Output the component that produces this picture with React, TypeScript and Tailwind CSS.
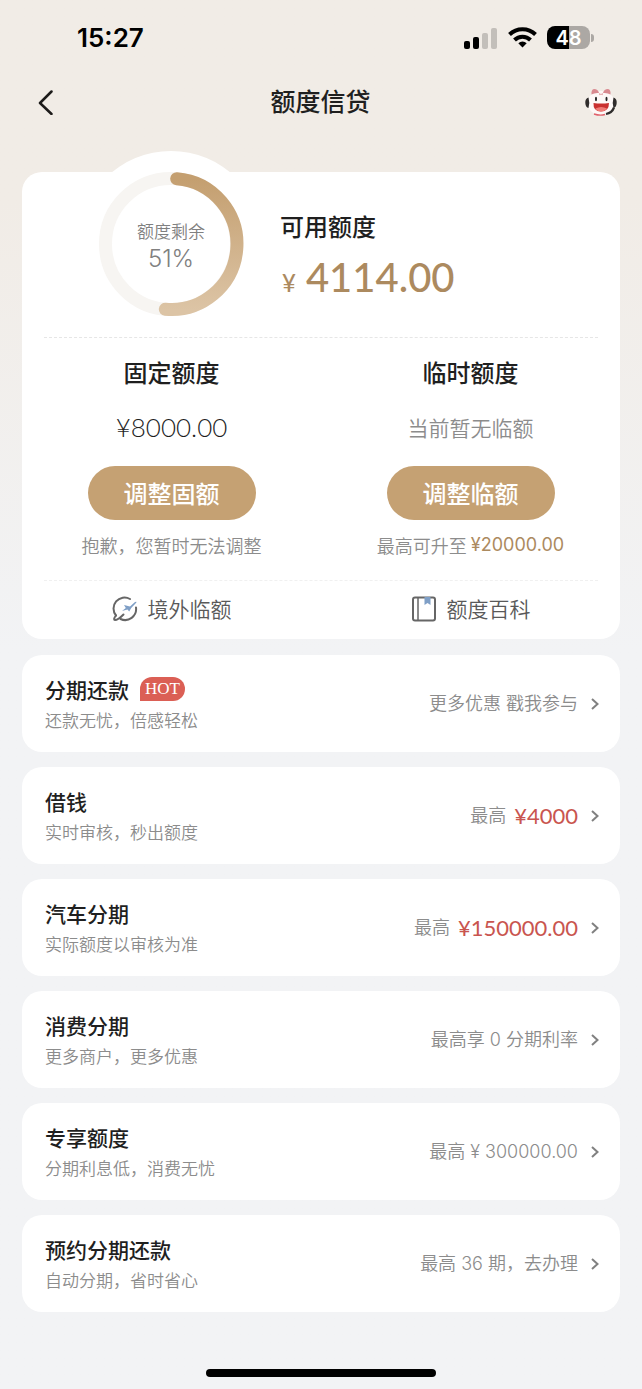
import React from 'react';

const latin = "font-['Inter','Noto_Sans_CJK_SC',sans-serif]";
const amount = "font-['Lato','Noto_Sans_CJK_SC',sans-serif]";

interface Product {
    title: string;
    desc: string;
    note: string;
    price?: string;
    hot?: boolean;
}

const products: Product[] = [
    { title: '分期还款', desc: '还款无忧，倍感轻松', note: '更多优惠 戳我参与', hot: true },
    { title: '借钱', desc: '实时审核，秒出额度', note: '最高', price: '¥4000' },
    { title: '汽车分期', desc: '实际额度以审核为准', note: '最高', price: '¥150000.00' },
    { title: '消费分期', desc: '更多商户，更多优惠', note: '最高享 0 分期利率' },
    { title: '专享额度', desc: '分期利息低，消费无忧', note: '最高 ¥ 300000.00' },
    { title: '预约分期还款', desc: '自动分期，省时省心', note: '最高 36 期，去办理' },
];

const StatusBar = () => (
    <div className="flex h-[75px] items-center justify-between pl-[77px] pr-12">
        <span className={`${latin} text-[26px] font-semibold leading-none text-black`}>15:27</span>
        <div className="flex items-center gap-[10px]">
            <svg width="34" height="22" viewBox="0 0 34 22">
                <rect x="0" y="14" width="6" height="8" rx="2" fill="#000" />
                <rect x="9" y="10" width="6" height="12" rx="2" fill="#000" />
                <rect x="18" y="6" width="6" height="16" rx="2" fill="#c3bfba" />
                <rect x="27" y="1" width="6" height="21" rx="2" fill="#c3bfba" />
            </svg>
            <svg width="29" height="21" viewBox="0 0 29 21" fill="none" stroke="#000" strokeWidth="4">
                <path d="M1.5 7.5a18.5 18.5 0 0 1 26 0" />
                <path d="M6.5 13a11.5 11.5 0 0 1 16 0" />
                <path d="M14.5 20.5l-4.2-4.3a6 6 0 0 1 8.4 0z" fill="#000" stroke="none" />
            </svg>
            <div className="flex items-center gap-px">
                <div className={`${latin} flex h-[23px] w-[43px] items-center justify-center rounded-lg bg-linear-to-r from-black from-50% to-[#aca8a4] to-50% text-xl font-semibold leading-none text-white`}>
                    48
                </div>
                <div className="h-2 w-[3px] rounded-r-full bg-[#aca8a4]" />
            </div>
        </div>
    </div>
);

const Mascot = () => (
    <svg width="32" height="30" viewBox="0 0 32 30">
        <ellipse cx="16" cy="16" rx="13.5" ry="12" fill="#fdf8f7" />
        <path d="M6.500 7.500Q6 2.500 9 2Q13 2 14 6Q9.500 5.500 6.500 7.500z" fill="#d98a90" />
        <path d="M25.500 7.500Q26 2.500 23 2Q19 2 18 6Q22.500 5.500 25.500 7.500z" fill="#d98a90" />
        <path d="M14.500 6.500l.8 1.500M17.500 6.500l-.8 1.500" stroke="#d98a90" strokeWidth="1.2" />
        <path d="M3.500 10.500Q0 11.500 0.300 16T3.500 21Q5 15.500 3.500 10.500z" fill="#2f2c2b" />
        <path d="M28.500 10.500Q32 11.500 31.700 16T28.500 21Q27 15.500 28.500 10.500z" fill="#2f2c2b" />
        <path d="M29 20.500Q27 26 21 27" fill="none" stroke="#2f2c2b" strokeWidth="2.2" />
        <path d="M9 27Q15 29 20 27.500" fill="none" stroke="#e0616b" strokeWidth="1.4" />
        <ellipse cx="11" cy="12" rx="1" ry="2.2" fill="#222" />
        <ellipse cx="21.500" cy="12" rx="1" ry="2.2" fill="#222" />
        <path d="M8.500 16Q16 17 24 16Q24 24.500 16 24.500T8.500 16z" fill="#c9302f" />
        <path d="M10.500 21.500Q16 18.500 22 21.500Q20 24.500 16 24.500T10.500 21.500z" fill="#ef7b76" />
    </svg>
);

const NavBar = () => (
    <header className="flex h-[54px] items-center justify-between pl-9 pr-[25px]">
        <button type="button" aria-label="返回" className="p-0.5">
            <svg width="16" height="26" viewBox="0 0 16 26" fill="none" stroke="#1d1b1a" strokeWidth="2.5" strokeLinecap="round" strokeLinejoin="round">
                <path d="M13.500 2.500L2 14L13.500 25" />
            </svg>
        </button>
        <h1 className="pb-1 text-[25px] font-medium leading-none text-[#1f1f1f]">额度信贷</h1>
        <button type="button" aria-label="客服">
            <Mascot />
        </button>
    </header>
);

const QuotaRing = () => (
    <div className="relative -mt-[21px] size-[186px] shrink-0 rounded-full bg-white">
        <svg width="186" height="186" viewBox="0 0 186 186" fill="none" strokeWidth="13">
            <defs>
                <linearGradient id="ring" x1="0" y1="0" x2="0" y2="1">
                    <stop offset="0" stopColor="#c49f70" />
                    <stop offset="1" stopColor="#dcc4a5" />
                </linearGradient>
            </defs>
            <circle cx="93" cy="93" r="65.500" stroke="#f7f5f2" />
            <path d="M98.700 27.750A65.500 65.500 0 1 1 87.300 158.250" stroke="url(#ring)" strokeLinecap="round" />
        </svg>
        <div className="absolute inset-0 flex flex-col items-center justify-center gap-1 pt-0.5 text-[#808080]">
            <span className="text-[17px] font-[350] leading-6">额度剩余</span>
            <span className={`${latin} text-2xl font-light leading-6`}>51%</span>
        </div>
    </div>
);

const PlaneIcon = () => (
    <svg width="26" height="26" viewBox="0 0 26 26" fill="none" strokeLinecap="round">
        <path d="M18 3A11 11 0 0 0 4 19.500" stroke="#666" strokeWidth="2" />
        <path d="M24 11.500A11 11 0 0 1 8.500 23" stroke="#666" strokeWidth="2" />
        <path d="M4 19.500Q0.800 23.500 3 24Q6 24 11.500 18.500" stroke="#666" strokeWidth="2" />
        <path d="M12 9l6 1.400 5-4.400q2.200-1 1.200.8l-5 5.200-2 3.600-1.700-2.100-5.500 1.500 3.800-3z" fill="#7f9fc6" />
    </svg>
);

const BookIcon = () => (
    <svg width="26" height="26" viewBox="0 0 26 26" fill="none" stroke="#666" strokeWidth="2">
        <rect x="2" y="1.500" width="22" height="23" rx="2" />
        <path d="M7 1.500V24.500" strokeWidth="1.500" />
        <path d="M13.500 1H19.500V9L16.500 7L13.500 9z" fill="#7f9fc6" stroke="none" />
    </svg>
);

const buttonClass = 'mt-[21px] h-[54px] w-[168px] rounded-full bg-[#c5a173] pb-px text-2xl font-medium text-white';

const QuotaCard = () => (
    <section className="rounded-[20px] bg-white">
        <div className="flex gap-4 pl-14">
            <QuotaRing />
            <div className="pt-9">
                <h2 className="text-2xl font-medium leading-9 text-[#1f1f1f]">可用额度</h2>
                <p className={`${amount} mt-2 flex items-baseline gap-[10px] pl-0.5 font-medium text-[#ac8a5f]`}>
                    <span className="text-2xl leading-none">¥</span>
                    <span className="text-[40px] leading-[50px]">4114.00</span>
                </p>
            </div>
        </div>

        <div className="mx-[22px] border-t border-dashed border-[#e6e6e6]" />

        <div className="grid grid-cols-2 pb-[21px] text-center">
            <div className="flex flex-col items-center pt-4">
                <h2 className="text-2xl font-medium leading-9 text-[#1f1f1f]">固定额度</h2>
                <p className={`${amount} mt-[19px] text-[26px] font-light leading-9 text-[#1f1f1f]`}>¥8000.00</p>
                <button type="button" className={buttonClass}>调整固额</button>
                <p className="mt-[11px] text-lg font-[350] leading-7 text-[#8c8c8c]">抱歉，您暂时无法调整</p>
            </div>
            <div className="flex flex-col items-center pt-4">
                <h2 className="text-2xl font-medium leading-9 text-[#1f1f1f]">临时额度</h2>
                <p className="mt-[19px] text-[21px] font-[350] leading-9 text-[#8c8c8c]">当前暂无临额</p>
                <button type="button" className={buttonClass}>调整临额</button>
                <p className="mt-[11px] flex gap-1 text-lg font-[350] leading-7 text-[#8c8c8c]">
                    最高可升至
                    <span className={`${latin} font-normal text-[#ac8a5f]`}>¥20000.00</span>
                </p>
            </div>
        </div>

        <div className="mx-[22px] border-t border-dashed border-[#f0f0f0]" />

        <div className="grid h-[58px] grid-cols-2">
            <a href="#overseas" className="flex items-center justify-center gap-[10px] pb-0.5 text-[21px] font-[350] text-[#595959]">
                <PlaneIcon />
                境外临额
            </a>
            <a href="#wiki" className="flex items-center justify-center gap-[10px] pb-0.5 text-[21px] font-[350] text-[#595959]">
                <BookIcon />
                额度百科
            </a>
        </div>
    </section>
);

const ProductRow = ({ title, desc, note, price, hot }: Product) => (
    <a href="#product" className="flex h-[97px] items-center justify-between rounded-[20px] bg-white pl-[23px] pr-5">
        <div>
            <h3 className="flex items-center gap-[11px] text-[21px] font-medium leading-8 text-[#1f1f1f]">
                {title}
                {hot && (
                    <span className="rounded-xl rounded-bl-none bg-[#db5f55] px-[5px] font-['Liberation_Serif',serif] text-[17px] font-normal leading-6 text-white">
                        HOT
                    </span>
                )}
            </h3>
            <p className="text-[17px] font-[350] leading-[30px] text-[#8c8c8c]">{desc}</p>
        </div>
        <div className="flex items-center">
            <span className={`${latin} text-lg font-[350] text-[#8c8c8c]`}>{note}</span>
            {price && <span className={`${amount} ml-2 text-[22px] text-[#c9554f]`}>{price}</span>}
            <svg className="ml-3" width="10" height="14" viewBox="0 0 10 14" fill="none" stroke="#808080" strokeWidth="2">
                <path d="M2 2L7.500 7L2 12" />
            </svg>
        </div>
    </a>
);

export default function App() {
    return (
        <div className="min-h-screen bg-[#f2f3f5] bg-linear-to-b from-[#f1ece6] from-[200px] to-[#f2f3f5] to-[650px] font-['Noto_Sans_CJK_SC',sans-serif]">
            <StatusBar />
            <NavBar />
            <main className="px-[22px] pt-[43px]">
                <QuotaCard />
                <div className="mt-4 flex flex-col gap-[15px]">
                    {products.map((item) => (
                        <ProductRow key={item.title} {...item} />
                    ))}
                </div>
            </main>
            <footer className="flex justify-center pb-3 pt-[57px]">
                <div className="h-2 w-[230px] rounded-full bg-black" />
            </footer>
        </div>
    );
}
